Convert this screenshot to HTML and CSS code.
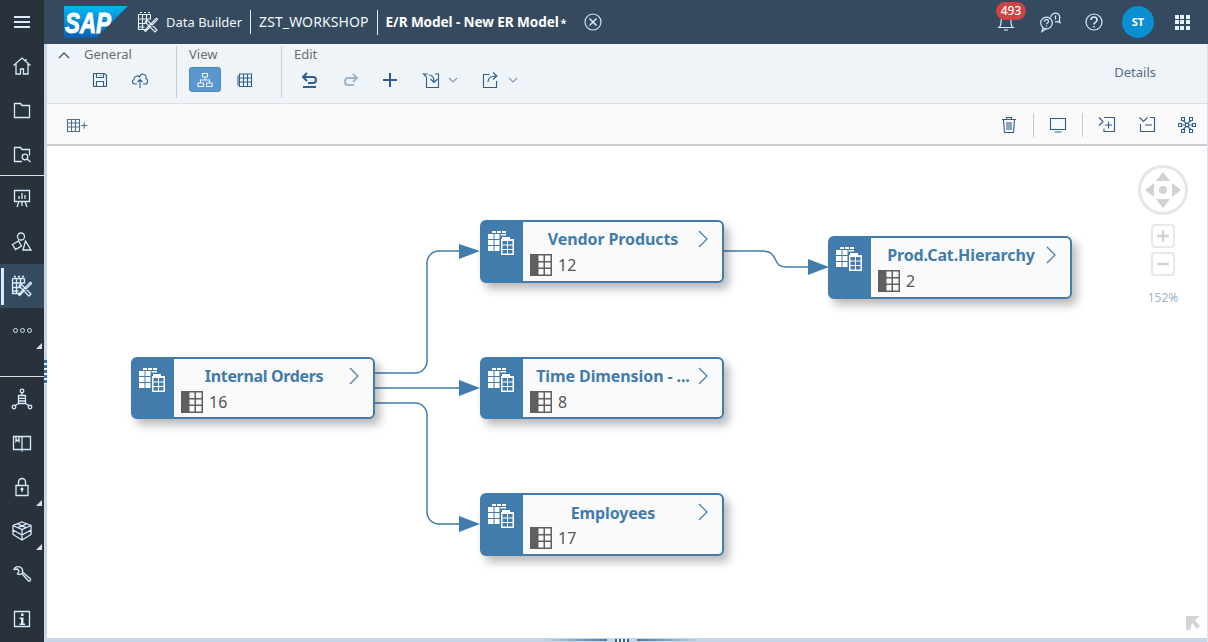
FILE: index.html
```html
<!DOCTYPE html>
<html lang="en">
<head>
<meta charset="utf-8">
<title>E/R Model - New ER Model</title>
<link rel="stylesheet" href="styles.css">
</head>
<body>
<svg class="defs" width="0" height="0" aria-hidden="true">
  <defs>
    <linearGradient id="sapg" x1="0" y1="0" x2="0" y2="1"><stop offset="0" stop-color="#00b8f1"/><stop offset="1" stop-color="#0a5fb4"/></linearGradient>
    <symbol id="i-builder" viewBox="0 0 22 22"><path d="M1.500 3.500h12M1.500 3.500v15h9M1.500 8h12M1.500 12.500h8M1.500 16h6M5.500 3.500v15M9.500 3.500v9M13.500 3.500v5M3 1.500h2M7 1.500h2M11 1.500h2"/><path d="M10 9l10 10-2 2L8 11zM20.500 8.500l-9.500 9.500-2.500 2.500-1-1 2.500-2.500 9-9.500c.8-.3 1.500 0 1.500 1z"/></symbol>
    <symbol id="i-home" viewBox="0 0 20 20"><path d="M1.500 9.500L10 2l8.500 7.500M4 8v10h4.500v-5h3v5H16V8M14 3v3"/></symbol>
    <symbol id="i-folder" viewBox="0 0 20 20"><path d="M2.500 3.500h6l1.500 2h7.500v12h-15z"/></symbol>
    <symbol id="i-fsearch" viewBox="0 0 20 20"><path d="M10 17.500H2.500v-14h6l1.500 2h7.500v6"/><circle cx="13" cy="13" r="2.800"/><path d="M15 15l3.500 3"/></symbol>
    <symbol id="i-board" viewBox="0 0 20 20"><path d="M2.500 2.500h15v11h-15zM7 13.500L5 19M13 13.500l2 5.500M10 13.500V18M7 11V8M10 11V5M13 11V7"/></symbol>
    <symbol id="i-shapes" viewBox="0 0 22 22"><circle cx="10" cy="5.500" r="3.500"/><path d="M1.500 13.500l6-3.500 3 5-6 3.500zM14.500 10l5.500 9h-8z"/></symbol>
    <symbol id="i-network" viewBox="0 0 22 22"><circle cx="11" cy="3" r="1.800"/><path d="M11 5v2M7.500 7.500h7v8h-7zM7.500 10.300h7M7.500 13h7M7.500 15.500L3.500 18M14.500 15.500l4 2.500"/><circle cx="3" cy="19" r="1.800"/><circle cx="19" cy="19" r="1.800"/></symbol>
    <symbol id="i-book" viewBox="0 0 20 20"><path d="M1.500 3.500h17v13h-17zM10 3.500v15M4 3.500v5l1.500-1.500L7 8.500v-5"/></symbol>
    <symbol id="i-lock" viewBox="0 0 20 20"><path d="M4 8.500h12v10H4zM6.500 8.500V5a3.500 3.500 0 0 1 7 0v3.500M10 12v3"/><circle class="solid" cx="10" cy="12" r="1.500"/></symbol>
    <symbol id="i-box" viewBox="0 0 22 22"><path d="M11 2l9 3.500v9L11 20l-9-5.500v-9zM2 5.500l9 4 9-4M11 9.500V20M2 10l9 5 9-5M6.500 3.800l9 4M15.500 3.800l-9 4"/></symbol>
    <symbol id="i-wrench" viewBox="0 0 20 20"><path d="M8.500 2.200C6 .8 2.500 2 2 4.500l3.500-.5 1.500 2-1.500 3c1.500.7 3.200.4 4.300-.5l6.700 7.500c.8.8 2.700-.7 2-2L10.500 7c.5-2-.5-3.800-2-4.800z"/></symbol>
    <symbol id="i-info" viewBox="0 0 20 20"><path d="M2.500 2.500h15v15h-15z"/><path class="solid" d="M9 4.500h2.500V7H9zM7.500 8.500h4v6h1.500V16H7.500v-1.500H9v-4.500H7.500z"/></symbol>
    <symbol id="i-bell" viewBox="0 0 20 20"><path d="M3 15.500c2-1.500 2-3 2-6s2-6 5-6 5 3 5 6 0 4.500 2 6zM8 18h4"/></symbol>
    <symbol id="i-chat" viewBox="0 0 22 22"><circle cx="7.500" cy="12" r="5.800"/><path d="M4 17l-1 3.500 4-2.700M11.500 6.500C12 3.500 15 1.500 17.500 2.200c3 .8 4 4 2.800 6.600l.7 3-2.800-1.300c-.8.400-1.500.5-2.200.4M16.500 4.500v4M5.500 10.500c0-2.500 4-2.500 4 0 0 1.500-2 1.300-2 2.800M7.500 14.500v1"/></symbol>
    <symbol id="i-help" viewBox="0 0 20 20"><circle cx="10" cy="10" r="8"/><path d="M7 8c0-4 6-4 6 0 0 2.500-3 2.300-3 4.500M10 14v1.500" stroke-width="1.600"/></symbol>
    <symbol id="i-save" viewBox="0 0 16 16"><path d="M1.500 1.500h11l2 2v11h-13zM4.500 1.500v4h7v-4M4.500 14.500v-5h7v5M9 3v1"/></symbol>
    <symbol id="i-cloud" viewBox="0 0 18 18"><path d="M6 13H4C1 13 .5 9.500 3 8.500 3 5 7 4 8.500 6 10 1 16 3 15 7.500c2.500 1 2 5.500-1 5.500h-2M9 17V8.500M6.500 11L9 8.500l2.500 2.500"/></symbol>
    <symbol id="i-hier" viewBox="0 0 16 16"><path d="M5.500 1.500h5v3.500h-5zM1 11h5.500v3.500H1zM9.500 11H15v3.500H9.500zM8 5v3M3.500 11V8h9v3"/></symbol>
    <symbol id="i-grid" viewBox="0 0 16 16"><path d="M2.500 2h12v12.500h-12zM2.500 6h12M2.500 10h12M6.500 2v12.500M10.500 2v12.500M1 3.500v10"/></symbol>
    <symbol id="i-undo" viewBox="0 0 18 18"><path d="M6 2L2 6l4 4M2.500 6H12c4 0 4 6 0 6H7M2 16h13" stroke-width="2"/></symbol>
    <symbol id="i-redo" viewBox="0 0 18 18"><path d="M12 3l4 4-4 4M15.500 7H7c-4 0-4 7 0 7h6" stroke-width="2"/></symbol>
    <symbol id="i-plus" viewBox="0 0 16 16"><path d="M8 1v14M1 8h14" stroke-width="2"/></symbol>
    <symbol id="i-import" viewBox="0 0 18 18"><path d="M6 3H1.500l3 3M4.500 6v10.500h12V3H13M7 4c3 0 5 2 5 7M8.500 8l3.500 3.500L15.500 8"/></symbol>
    <symbol id="i-share" viewBox="0 0 18 18"><path d="M7 3.500H1.500v13h13V10M6 11c0-4 3-6 8-6M11 1.500L15 5l-4 3.500"/></symbol>
    <symbol id="i-down" viewBox="0 0 10 6"><path d="M1 1l4 4 4-4"/></symbol>
    <symbol id="i-addtable" viewBox="0 0 22 16"><path d="M1.500 2.500h12v12h-12zM1.500 6h12M1.500 10h12M5.500 2.500v12M9.500 2.500v12M15 8.500h6.500M18.200 5.200v6.600"/></symbol>
    <symbol id="i-trash" viewBox="0 0 16 18"><path d="M1 3.500h14M5.500 3.500V1.500h5v2M2.500 3.500l1 13h9l1-13M6 6v8M8 6v8M10 6v8"/></symbol>
    <symbol id="i-monitor" viewBox="0 0 18 16"><path d="M1.500 1.500h15v11h-15zM5.500 15h7"/></symbol>
    <symbol id="i-expand" viewBox="0 0 18 18"><path d="M1 1.500l4 4-4 4M6 1.500h10.500v14H6v-3M7 9h7M10.500 5.500v7"/></symbol>
    <symbol id="i-collapse" viewBox="0 0 18 18"><path d="M1.500 1.500l4 4 4-4M12 1.500h4.500v14h-14V8M7 9h7"/></symbol>
    <symbol id="i-layout" viewBox="0 0 18 18"><path d="M3.500 1.500h3v3h-3zM11.500 1.500h3v3h-3zM.5 7.500h3v3h-3zM7.500 7.500h3v3h-3zM14.500 7.500h3v3h-3zM3.500 13.500h3v3h-3zM11.500 13.500h3v3h-3zM3.500 9h4M10.500 9h4M5 4.500l3.500 3M13 4.500l-3.500 3M5 13.500l3.500-3M13 13.500l-3.500-3"/></symbol>
    <symbol id="i-entity" viewBox="0 0 26 26"><path class="solid" d="M4 1h4v2H4zM9 1h4v2H9zM14 1h4v2h-4zM0 4h5.500v5H0zM6.500 4h5v5h-5zM12.500 4H18v1.500h-5.500zM0 10h5.500v5H0zM6.500 10h5v5h-5zM0 16h5.500v5H0zM6.500 16h5v5h-5z"/><path class="solid" d="M14 7h8v2h4v16H13V9h1zM14.500 11v3.500h4.500V11zM20 11v3.500h4.500V11zM14.500 15.500V19h4.500v-3.500zM20 15.500V19h4.500v-3.500zM14.500 20v3.500h4.500V20zM20 20v3.500h4.500V20z" fill-rule="evenodd"/></symbol>
    <symbol id="i-count" viewBox="0 0 22 22"><path d="M0 0h22v22H0zM8.500 1.500v5.500h5V1.500zM15 1.500v5.500h5.500V1.500zM8.500 8.500v5h5v-5zM15 8.500v5h5.500v-5zM8.500 15v5.500h5V15zM15 15v5.500h5.500V15z" fill="#5f5f5f" fill-rule="evenodd" stroke="none"/></symbol>
    <symbol id="i-chev" viewBox="0 0 10 18"><path d="M1 1l8 8-8 8"/></symbol>
  </defs>
</svg>

<div class="app">
  <nav class="rail">
    <a class="rail-item"><span class="burger"></span></a>
    <a class="rail-item"><svg class="ic"><use href="#i-home"/></svg></a>
    <a class="rail-item"><svg class="ic"><use href="#i-folder"/></svg></a>
    <a class="rail-item rail-last"><svg class="ic"><use href="#i-fsearch"/></svg></a>
    <a class="rail-item"><svg class="ic"><use href="#i-board"/></svg></a>
    <a class="rail-item"><svg class="ic ic-22"><use href="#i-shapes"/></svg></a>
    <a class="rail-item rail-active"><svg class="ic ic-22"><use href="#i-builder"/></svg></a>
    <a class="rail-item rail-more"><span class="dots"><i></i><i></i><i></i></span></a>
    <div class="rail-gap"></div>
    <a class="rail-item"><svg class="ic ic-22"><use href="#i-network"/></svg></a>
    <a class="rail-item"><svg class="ic"><use href="#i-book"/></svg></a>
    <a class="rail-item rail-more"><svg class="ic"><use href="#i-lock"/></svg></a>
    <a class="rail-item rail-more"><svg class="ic ic-22"><use href="#i-box"/></svg></a>
    <a class="rail-item"><svg class="ic"><use href="#i-wrench"/></svg></a>
    <a class="rail-item"><svg class="ic info-ic"><use href="#i-info"/></svg></a>
  </nav>

  <div class="main">
    <header class="shell">
      <svg class="sap" viewBox="0 0 64 32" role="img" aria-label="SAP">
        <path d="M0 0h64L32 32H0z" fill="url(#sapg)"/>
        <text x="1" y="26.500" class="sap-text" textLength="46" lengthAdjust="spacingAndGlyphs">SAP</text>
      </svg>
      <svg class="ic ic-22 crumb-ic"><use href="#i-builder"/></svg>
      <span class="crumb crumb-first">Data Builder</span>
      <span class="crumb crumb-sep">ZST_WORKSHOP</span>
      <span class="crumb crumb-sep crumb-title">E/R Model - New ER Model<small>*</small></span>
      <svg class="close" viewBox="0 0 18 18"><circle cx="9" cy="9" r="8"/><path d="M5.500 5.500l7 7M12.500 5.500l-7 7" stroke-width="1.500"/></svg>
      <div class="shell-right">
        <span class="shell-btn bell"><svg class="ic"><use href="#i-bell"/></svg><b class="badge">493</b></span>
        <span class="shell-btn"><svg class="ic ic-22"><use href="#i-chat"/></svg></span>
        <span class="shell-btn"><svg class="ic"><use href="#i-help"/></svg></span>
        <span class="shell-btn"><span class="avatar">ST</span></span>
        <span class="shell-btn"><span class="apps"><i></i><i></i><i></i><i></i><i></i><i></i><i></i><i></i><i></i></span></span>
      </div>
    </header>

    <div class="workspace">
      <div class="strip"><span class="grip"></span></div>
      <div class="content">
        <section class="ribbon">
          <div class="rgroup rg-general">
            <svg class="collapse" viewBox="0 0 12 7"><path d="M1 6l5-5 5 5"/></svg>
            <div class="rcol rcol-general">
              <span class="rlabel">General</span>
              <div class="rbtns rbtns-wide">
                <span class="rbtn"><svg class="t16"><use href="#i-save"/></svg></span>
                <span class="rbtn"><svg class="t18"><use href="#i-cloud"/></svg></span>
              </div>
            </div>
          </div>
          <div class="rgroup rg-view">
            <div class="rcol">
              <span class="rlabel">View</span>
              <div class="rbtns">
                <span class="rbtn rbtn-on"><svg class="t16"><use href="#i-hier"/></svg></span>
                <span class="rbtn"><svg class="t16"><use href="#i-grid"/></svg></span>
              </div>
            </div>
          </div>
          <div class="rgroup rg-edit">
            <div class="rcol">
              <span class="rlabel">Edit</span>
              <div class="rbtns">
                <span class="rbtn"><svg class="t18"><use href="#i-undo"/></svg></span>
                <span class="rbtn rbtn-off"><svg class="t18"><use href="#i-redo"/></svg></span>
                <span class="rbtn"><svg class="t16"><use href="#i-plus"/></svg></span>
                <span class="rbtn rbtn-menu"><svg class="t18"><use href="#i-import"/></svg><svg class="caret"><use href="#i-down"/></svg></span>
                <span class="rbtn rbtn-menu"><svg class="t18"><use href="#i-share"/></svg><svg class="caret"><use href="#i-down"/></svg></span>
              </div>
            </div>
          </div>
          <span class="details">Details</span>
        </section>

        <div class="ctools">
          <svg class="addtable"><use href="#i-addtable"/></svg>
          <div class="ctools-right">
            <svg class="t18"><use href="#i-trash"/></svg>
            <span class="vsep"></span>
            <svg class="t18"><use href="#i-monitor"/></svg>
            <span class="vsep"></span>
            <svg class="t18"><use href="#i-expand"/></svg>
            <svg class="t18 wide-gap"><use href="#i-collapse"/></svg>
            <svg class="t18 wide-gap"><use href="#i-layout"/></svg>
          </div>
        </div>

        <div class="canvas">
          <svg class="edges" viewBox="47 146 1160 492">
            <path d="M375 373h40a12 12 0 0 0 12-12V263a12 12 0 0 1 12-12h22"/>
            <path d="M375 388h86"/>
            <path d="M375 403h40a12 12 0 0 1 12 12v97a12 12 0 0 0 12 12h22"/>
            <path d="M724 251h38c18 0 9 16 24 16h24"/>
            <polygon points="459,244 480,251 459,259"/>
            <polygon points="459,380 480,388 459,396"/>
            <polygon points="459,516 480,524 459,532"/>
            <polygon points="808,259 829,267 808,275"/>
          </svg>

          <article class="node n-orders">
            <div class="node-side"><svg class="entity"><use href="#i-entity"/></svg></div>
            <div class="node-body">
              <div class="node-head"><span class="node-title">Internal Orders</span><svg class="chev"><use href="#i-chev"/></svg></div>
              <div class="node-count"><svg class="count-ic"><use href="#i-count"/></svg><span>16</span></div>
            </div>
          </article>
          <article class="node n-vendor">
            <div class="node-side"><svg class="entity"><use href="#i-entity"/></svg></div>
            <div class="node-body">
              <div class="node-head"><span class="node-title">Vendor Products</span><svg class="chev"><use href="#i-chev"/></svg></div>
              <div class="node-count"><svg class="count-ic"><use href="#i-count"/></svg><span>12</span></div>
            </div>
          </article>
          <article class="node n-prod">
            <div class="node-side"><svg class="entity"><use href="#i-entity"/></svg></div>
            <div class="node-body">
              <div class="node-head"><span class="node-title">Prod.Cat.Hierarchy</span><svg class="chev"><use href="#i-chev"/></svg></div>
              <div class="node-count"><svg class="count-ic"><use href="#i-count"/></svg><span>2</span></div>
            </div>
          </article>
          <article class="node n-time">
            <div class="node-side"><svg class="entity"><use href="#i-entity"/></svg></div>
            <div class="node-body">
              <div class="node-head"><span class="node-title">Time Dimension - ...</span><svg class="chev"><use href="#i-chev"/></svg></div>
              <div class="node-count"><svg class="count-ic"><use href="#i-count"/></svg><span>8</span></div>
            </div>
          </article>
          <article class="node n-emp">
            <div class="node-side"><svg class="entity"><use href="#i-entity"/></svg></div>
            <div class="node-body">
              <div class="node-head"><span class="node-title">Employees</span><svg class="chev"><use href="#i-chev"/></svg></div>
              <div class="node-count"><svg class="count-ic"><use href="#i-count"/></svg><span>17</span></div>
            </div>
          </article>

          <div class="navpad">
            <svg class="pad" viewBox="0 0 52 52">
              <circle class="pad-ring" cx="26" cy="26" r="23.500"/>
              <circle class="pad-fill" cx="26" cy="26" r="4"/>
              <path class="pad-fill" d="M26 8l7 9H19zM26 44l-7-9h14zM8 26l9-7v14zM44 26l-9 7V19z"/>
            </svg>
            <span class="zoombtn"><svg viewBox="0 0 24 24"><path d="M5 12h14M12 5v14"/></svg></span>
            <span class="zoombtn"><svg viewBox="0 0 24 24"><path d="M5 12h14"/></svg></span>
            <span class="zoomval">152%</span>
          </div>
          <svg class="corner" viewBox="0 0 14 14"><path d="M0 0h14L9 4l5 6-3 3-5-6-2 7H0z"/></svg>
        </div>

        <div class="bottom"><span class="bline"></span><span class="bdots"></span><span class="bline bline-r"></span></div>
      </div>
    </div>
  </div>
</div>
</body>
</html>
```
FILE: styles.css
```css
* { box-sizing: border-box; }
html, body { margin: 0; height: 100%; overflow: hidden; }
body { font-family: "Noto Sans", "Open Sans", Arial, sans-serif; background: #fff; }
.defs { position: absolute; }
svg { display: block; fill: none; stroke: currentColor; stroke-width: 1.1; }
svg .solid { fill: currentColor; stroke: none; }

.app { display: flex; width: 1208px; height: 642px; }

/* left rail */
.rail { width: 44px; flex: none; display: flex; flex-direction: column; background: #29313a; color: #d7ecff; stroke-width: 1.3; }
.rail-item { position: relative; height: 44px; flex: none; display: flex; align-items: center; justify-content: center; }
.rail-item svg { stroke-width: 1.3; }
.rail-last { border-bottom: 1px solid #d8dde2; }
.rail-gap { height: 26px; flex: none; border-bottom: 1px solid #d8dde2; margin-top: -1px; }
.rail-active { background: #354a5f; }
.rail-active::before { content: ""; position: absolute; left: 1px; top: 4px; bottom: 3px; width: 3px; background: #dbeafa; }
.rail-more::after { content: ""; position: absolute; right: 2px; bottom: 3px; border-style: solid; border-width: 0 0 6px 6px; border-color: transparent transparent #d9dfe5 transparent; }
.ic { width: 20px; height: 20px; }
.ic-22 { width: 22px; height: 22px; }
.info-ic .solid { fill: currentColor; }
.burger { width: 16px; height: 12px; border-top: 2px solid #d7ecff; border-bottom: 2px solid #d7ecff; position: relative; }
.burger::before { content: ""; position: absolute; left: 0; right: 0; top: 3px; height: 2px; background: #d7ecff; }
.dots { display: flex; gap: 2px; }
.dots i { width: 5px; height: 5px; border: 1.500px solid #cfe6fb; border-radius: 50%; }

.main { flex: 1; min-width: 0; display: flex; flex-direction: column; }

/* shell */
.shell { height: 44px; flex: none; display: flex; align-items: center; background: #354a5f; color: #fff; padding-left: 20px; font-size: 14px; }
.sap { width: 64px; height: 32px; flex: none; stroke: none; }
.sap-text { font-family: "Liberation Sans", Arial, sans-serif; font-size: 29px; font-weight: 700; font-style: italic; fill: #fff; stroke: #fff; stroke-width: .9; }
.crumb-ic { margin-left: 9px; color: #e5f0fb; }
.crumb { margin-left: 7px; white-space: nowrap; color: #f2f6fa; }
.crumb-first { font-size: 13px; }
.crumb-sep { margin-left: 8px; padding-left: 8px; border-left: 1px solid #e5ebf1; line-height: 24px; letter-spacing: .1px; }
.crumb-title { font-weight: 700; color: #fff; font-size: 13.600px; letter-spacing: -.1px; }
.crumb-title small { font-size: 11px; margin-left: 2px; }
.close { width: 18px; height: 18px; margin-left: 18px; color: #d7ecff; }
.shell-right { margin-left: auto; display: flex; padding-right: 4px; color: #d7ecff; }
.shell-btn { position: relative; width: 44px; height: 44px; display: flex; align-items: center; justify-content: center; }
.shell-btn svg { stroke-width: 1.2; }
.badge { position: absolute; left: 12px; top: 2px; width: 30px; height: 18px; border-radius: 9px; background: #d04343; color: #fff; font-size: 12px; font-weight: 500; line-height: 18px; text-align: center; }
.avatar { width: 32px; height: 32px; border-radius: 50%; background: #0a8fd3; color: #fff; font-size: 11px; font-weight: 700; line-height: 32px; text-align: center; }
.apps { display: grid; grid-template-columns: repeat(3, 4px); gap: 1.500px; }
.apps i { height: 4px; background: #e5f1fc; }

/* workspace */
.workspace { flex: 1; min-height: 0; display: flex; }
.strip { width: 3px; flex: none; background: #c6d7e7; position: relative; }
.grip { position: absolute; left: 0; top: 316px; width: 3px; height: 24px; background: repeating-linear-gradient(#2f6da3 0 3px, #eef3f8 3px 5px); }
.content { flex: 1; min-width: 0; display: flex; flex-direction: column; border-right: 1px solid #dfe3e7; }

/* ribbon */
.ribbon { height: 60px; flex: none; display: flex; background: #eff4f9; border-bottom: 1px solid #d5e0ea; color: #346187; }
.rgroup { display: flex; margin-top: 2px; height: 52px; border-right: 1px solid #c4ced8; }
.rg-general { width: 130px; }
.rg-view { width: 105px; padding-left: 12px; }
.rg-edit { border-right: 0; padding-left: 12px; }
.collapse { width: 12px; height: 7px; margin: 6px 0 0 11px; stroke-width: 1.400; color: #3c5a7c; }
.rcol { display: flex; flex-direction: column; }
.rcol-general { margin-left: 14px; }
.rlabel { font-size: 13px; line-height: 16px; color: #6a6d70; }
.rbtns { display: flex; gap: 8px; margin-top: 5px; }
.rbtns-wide { margin-left: -4px; }
.rbtn { width: 32px; height: 25px; display: flex; align-items: center; justify-content: center; border-radius: 3px; color: #2f5f8d; }
.rbtns-wide .rbtn { width: 40px; margin-right: -8px; }
.rbtn-on { background: #5b97cf; border: 1px solid #4b86bd; color: #eef5fb; }
.rbtn-off { color: #9fb5c9; }
.rbtn-menu { width: 44px; gap: 8px; justify-content: flex-start; margin-left: 8px; flex: none; }
.caret { width: 10px; height: 6px; color: #7f98b2; flex: none; }
.t16 { width: 16px; height: 16px; flex: none; }
.t18 { width: 18px; height: 18px; flex: none; }
.details { margin-left: auto; margin-top: 19px; margin-right: 51px; font-size: 13px; line-height: 18px; color: #556b82; }

/* canvas toolbar */
.ctools { height: 42px; flex: none; display: flex; align-items: center; background: #fafafa; border-bottom: 2px solid #cfcfcf; padding: 2px 11px 0 19px; color: #2f5f8d; }
.addtable { width: 22px; height: 16px; color: #52708a; }
.ctools-right { margin-left: auto; display: flex; align-items: center; gap: 15px; }
.vsep { width: 1px; height: 24px; background: #c9c9c9; }
.wide-gap { margin-left: 7px; }

/* canvas */
.canvas { position: relative; flex: 1; min-height: 0; background: #fff; overflow: hidden; }
.edges { position: absolute; left: 0; top: 0; width: 1160px; height: 492px; color: #427cac; stroke-width: 1.500; }
.edges polygon { fill: #427cac; stroke: none; }

.node { position: absolute; width: 244px; height: 62px; display: flex; background: #fafafa; border: 2px solid #427cac; border-radius: 6px; box-shadow: 5px 6px 10px rgba(0, 0, 0, .28); }
.n-orders { left: 84px; top: 211px; }
.n-vendor { left: 433px; top: 74px; height: 63px; }
.n-prod { left: 781px; top: 90px; height: 63px; }
.n-time { left: 433px; top: 211px; }
.n-emp { left: 433px; top: 347px; height: 63px; }
.n-orders .node-title { letter-spacing: -.35px; }
.n-emp .node-head { padding-top: 2px; }
.node-side { width: 42px; flex: none; background: #427cac; color: #fff; padding: 9px 0 0 7px; margin: -1px 0 -1px -1px; border-radius: 4px 0 0 4px; }
.entity { width: 26px; height: 26px; }
.node-body { flex: 1; min-width: 0; display: flex; flex-direction: column; }
.node-head { height: 34px; flex: none; position: relative; display: flex; align-items: center; justify-content: center; padding-right: 19px; }
.node-title { font-size: 16px; font-weight: 700; color: #427cac; white-space: nowrap; letter-spacing: -.1px; }
.chev { position: absolute; right: 14px; top: 8px; width: 10px; height: 18px; color: #427cac; stroke-width: 1.200; }
.node-count { display: flex; align-items: center; gap: 6px; padding-left: 7px; font-size: 16px; line-height: 22px; color: #555; margin-top: -2px; }
.count-ic { width: 22px; height: 22px; }

.navpad { position: absolute; right: 18px; top: 18px; width: 52px; display: flex; flex-direction: column; align-items: center; }
.pad { width: 52px; height: 52px; stroke: none; }
.pad-ring { fill: none; stroke: #e6e6e6; stroke-width: 3; }
.pad-fill { fill: #d2d2d2; }
.zoombtn { width: 24px; height: 24px; margin-top: 4px; border: 2px solid #e8e8e8; border-radius: 4px; color: #d2d2d2; background: #fff; }
.zoombtn svg { width: 20px; height: 20px; stroke-width: 3; }
.pad + .zoombtn { margin-top: 8px; }
.zoomval { margin-top: 14px; font-size: 12px; line-height: 16px; color: #9db3c7; }
.corner { position: absolute; right: 7px; bottom: 8px; width: 14px; height: 14px; stroke: none; fill: #d4d4d4; }

.bottom { height: 4px; flex: none; background: #c6d7e7; display: flex; align-items: flex-start; justify-content: center; gap: 8px; padding-right: 10px; }
.bline { width: 65px; height: 2px; margin-top: 1px; background: linear-gradient(90deg, #c6d7e7, #3f7db2); }
.bline-r { background: linear-gradient(90deg, #3f7db2, #c6d7e7); }
.bdots { width: 14px; height: 3px; margin-top: 1px; background: repeating-linear-gradient(90deg, #33608c 0 2px, #eff4f9 2px 4px); }
```
